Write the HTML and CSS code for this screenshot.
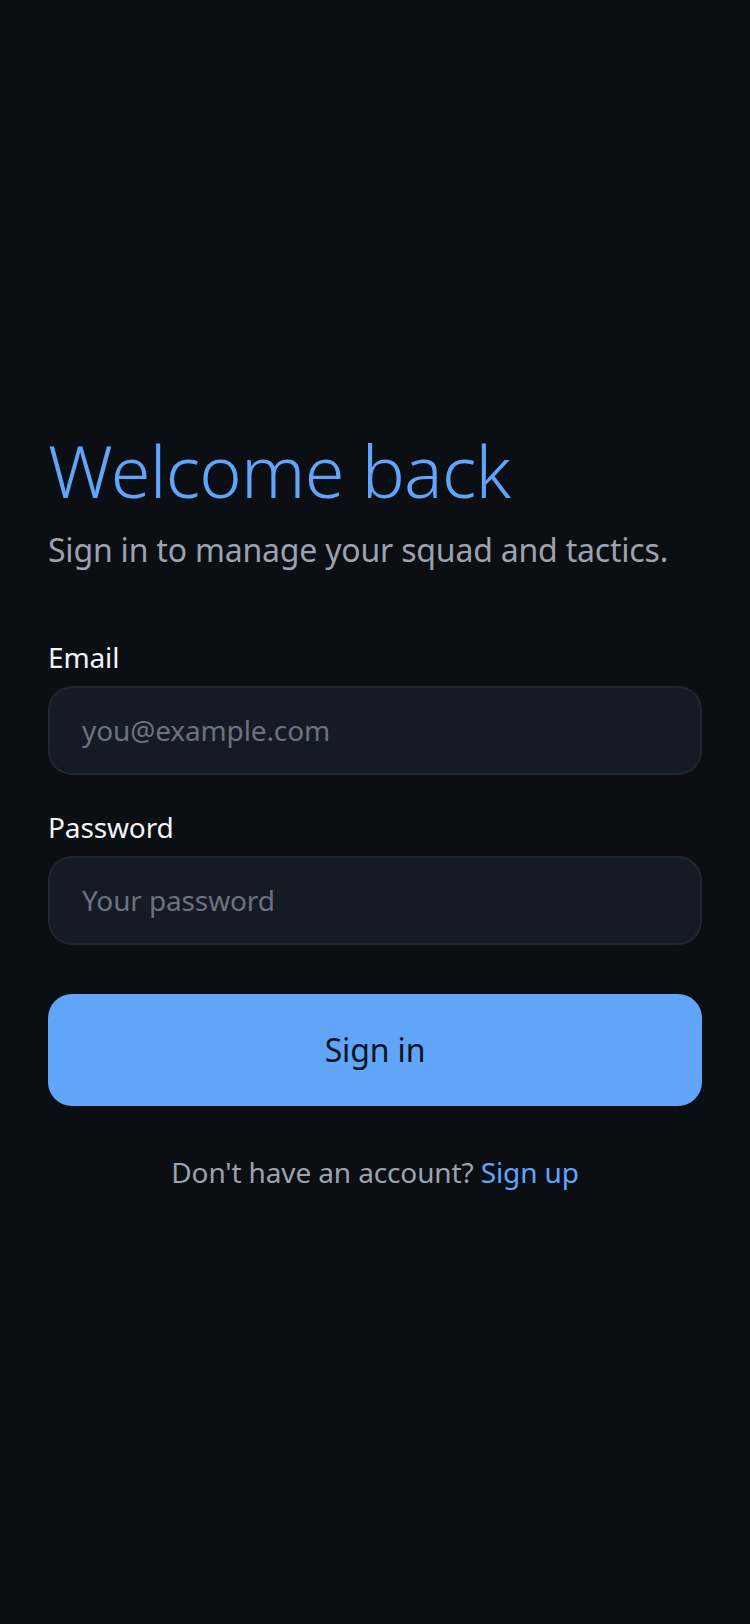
FILE: index.html
```html
<!DOCTYPE html>
<html lang="en">
<head>
<meta charset="utf-8">
<title>Sign in</title>
<link rel="stylesheet" href="styles.css">
</head>
<body>
<main class="page">
  <section class="auth">
    <h1 class="title">Welcome back</h1>
    <p class="subtitle">Sign in to manage your squad and tactics.</p>
    <form class="form">
      <div class="field">
        <label class="label" for="email">Email</label>
        <input class="input" id="email" type="email" placeholder="you@example.com">
      </div>
      <div class="field">
        <label class="label" for="password">Password</label>
        <input class="input" id="password" type="password" placeholder="Your password">
      </div>
      <button class="button" type="button">Sign in</button>
    </form>
    <p class="footer">Don't have an account? <a class="link" href="#">Sign up</a></p>
  </section>
</main>
</body>
</html>
```
FILE: styles.css
```css
* { box-sizing: border-box; }
html, body { margin: 0; padding: 0; }
body {
  background: #0b0f14;
  font-family: "Noto Sans", "Open Sans", sans-serif;
  color: #f3f4f6;
  letter-spacing: -0.008em;
}
.page {
  min-height: 1624px;
  display: flex;
  flex-direction: column;
  justify-content: center;
  padding: 0 48px 5px;
}
.auth { display: flex; flex-direction: column; }
.title {
  margin: 0;
  font-size: 72px;
  font-weight: 300;
  line-height: 86px;
  color: #60a5fa;
  letter-spacing: -0.01em;
}
.subtitle {
  margin: 13px 0 0;
  font-size: 32px;
  line-height: 48px;
  color: #9ca3af;
  letter-spacing: -0.2px;
}
.form {
  display: flex;
  flex-direction: column;
  margin-top: 62px;
}
.field {
  display: flex;
  flex-direction: column;
  gap: 8px;
  margin-bottom: 31px;
}
.field + .field { margin-bottom: 49px; }
.label {
  font-size: 28px;
  line-height: 42px;
  color: #f3f4f6;
}
.input {
  height: 89px;
  border: 2px solid #1e2632;
  border-radius: 24px;
  background: #151b24;
  padding: 0 32px;
  font-family: inherit;
  font-size: 28px;
  letter-spacing: inherit;
  color: #f3f4f6;
  outline: none;
}
.input::placeholder { color: #6b7280; }
.button {
  height: 112px;
  border: none;
  border-radius: 24px;
  background: #60a5fa;
  color: #0b1220;
  font-family: inherit;
  font-size: 32px;
  letter-spacing: inherit;
  line-height: 48px;
}
.footer {
  margin: 45px 0 0;
  text-align: center;
  font-size: 28px;
  line-height: 42px;
  color: #9ca3af;
}
.link { color: #60a5fa; text-decoration: none; }
```
